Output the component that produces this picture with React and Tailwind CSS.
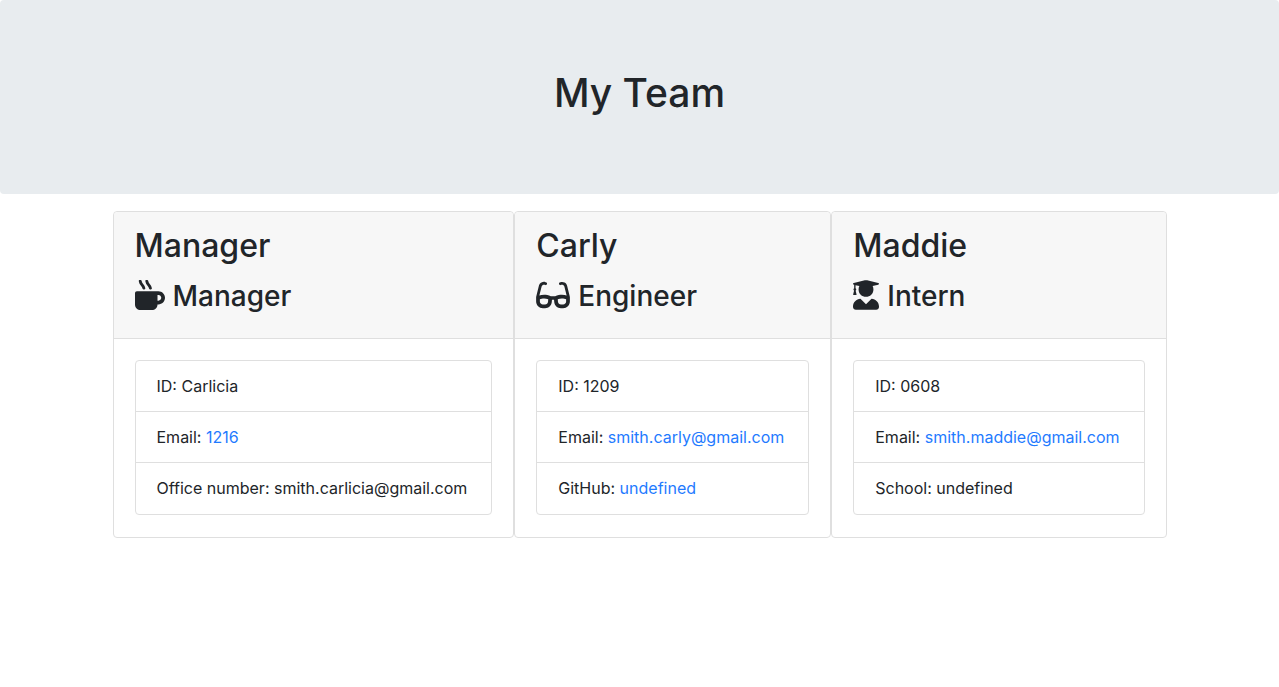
import { FaMugHot, FaGlasses, FaUserGraduate } from "react-icons/fa";

const team = [
  {
    name: "Manager",
    role: "Manager",
    Icon: FaMugHot,
    iconClass: "w-[30px]",
    rows: [
      { label: "ID:", value: "Carlicia" },
      { label: "Email:", value: "1216", href: "mailto:1216" },
      { label: "Office number:", value: "smith.carlicia@gmail.com" },
    ],
  },
  {
    name: "Carly",
    role: "Engineer",
    Icon: FaGlasses,
    iconClass: "w-[34px]",
    rows: [
      { label: "ID:", value: "1209" },
      { label: "Email:", value: "smith.carly@gmail.com", href: "mailto:smith.carly@gmail.com" },
      { label: "GitHub:", value: "undefined", href: "https://github.com/undefined" },
    ],
  },
  {
    name: "Maddie",
    role: "Intern",
    Icon: FaUserGraduate,
    iconClass: "w-[26px]",
    rows: [
      { label: "ID:", value: "0608" },
      { label: "Email:", value: "smith.maddie@gmail.com", href: "mailto:smith.maddie@gmail.com" },
      { label: "School:", value: "undefined" },
    ],
  },
];

function Card({ member }) {
  const { name, role, Icon, iconClass, rows } = member;
  return (
    <article className="flex-auto rounded border border-[#dfdfdf] bg-white">
      <header className="rounded-t border-b border-[#dfdfdf] bg-[#f7f7f7] px-[21px] pt-[13px] pb-[21px]">
        <h2 className="mb-2 text-[32px] leading-[42px] font-medium">{name}</h2>
        <h3 className="text-[28px] leading-[42px] font-medium">
          <Icon className={`mr-2 inline-block h-[30px] align-[-4px] ${iconClass}`} aria-hidden="true" />
          {role}
        </h3>
      </header>
      <div className="px-[21px] pt-[21px] pb-[22px]">
        <ul className="divide-y divide-[#dfdfdf] rounded border border-[#dfdfdf]">
          {rows.map((row) => (
            <li key={row.label} className="px-[21px] pt-[13px] pb-[13px] text-base whitespace-nowrap last:pb-[14px]">
              {row.label}{" "}
              {row.href ? (
                <a href={row.href} className="text-[#1f7bff] hover:underline">{row.value}</a>
              ) : (
                row.value
              )}
            </li>
          ))}
        </ul>
      </div>
    </article>
  );
}

export default function App() {
  return (
    <div className="font-['Inter',sans-serif] text-[#212529]">
      <header className="mb-[17px] rounded bg-[#e8ecef] px-8 pt-[67px] pb-[75px] text-center">
        <h1 className="text-[39px] leading-[52px] font-medium">My Team</h1>
      </header>
      <main className="mx-auto flex max-w-[1054px] flex-wrap justify-center">
        {team.map((member) => (
          <Card key={member.name} member={member} />
        ))}
      </main>
    </div>
  );
}
